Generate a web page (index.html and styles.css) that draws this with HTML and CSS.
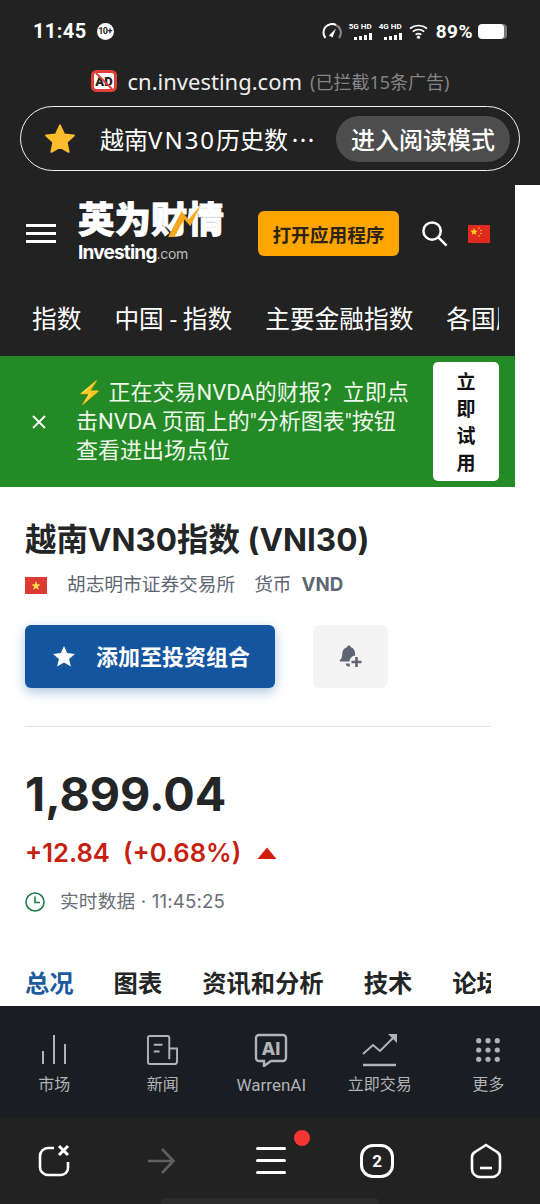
FILE: index.html
```html
<!DOCTYPE html>
<html lang="zh">
<head>
    <meta charset="UTF-8">
    <meta name="viewport" content="width=device-width, initial-scale=1.0">
    <title>越南VN30指数</title>
    <link rel="stylesheet" href="styles.css">
</head>
<body>
    <!-- Status bar -->
    <div class="status-bar">
        <div class="status-left">
            <span class="clock">11:45</span>
            <span class="notif-badge">10+</span>
        </div>
        <div class="status-right">
            <svg class="speed-icon" width="20" height="16" viewBox="0 0 20 16">
                <path d="M3.500 15A8.500 8.500 0 0 1 14 2" fill="none" stroke="#fff" stroke-width="2"/>
                <path d="M14 2A8.500 8.500 0 0 1 17 15" fill="none" stroke="#888" stroke-width="2"/>
                <path d="M7 12.500l7-7-3.500 9z" fill="#fff"/>
            </svg>
            <div class="signal">
                <span class="signal-label">5G HD</span>
                <span class="signal-bars"><i class="b1"></i><i class="b2"></i><i class="b3"></i><i class="b4"></i></span>
            </div>
            <div class="signal">
                <span class="signal-label">4G HD</span>
                <span class="signal-bars"><i class="b1"></i><i class="b2"></i><i class="b3"></i><i class="b4"></i></span>
            </div>
            <svg class="wifi-icon" width="20" height="15" viewBox="0 0 20 15">
                <path d="M1 4.500C6 .5 13 .5 18 4.500M3.800 7.600C7.200 5 11.800 5 15.200 7.600M6.600 10.600c1.800-1.200 4-1.200 5.800 0" fill="none" stroke="#fff" stroke-width="1.700"/>
                <circle cx="9.500" cy="13.200" r="1.600" fill="#fff"/>
            </svg>
            <span class="battery-text">89%</span>
            <span class="battery"><span class="battery-fill"></span></span>
        </div>
    </div>

    <!-- Browser address -->
    <div class="address-row">
        <svg class="ad-icon" width="26" height="22" viewBox="0 0 26 22">
            <rect x="1.500" y="1.500" width="23" height="19" rx="4" fill="#fff" stroke="#e0403a" stroke-width="3"/>
            <text x="13" y="16" text-anchor="middle" class="ad-text">AD</text>
            <path d="M5 3l16 16" stroke="#e0403a" stroke-width="2"/>
        </svg>
        <span class="address-host">cn.investing.com</span>
        <span class="address-note">(已拦截15条广告)</span>
    </div>
    <div class="reader-pill">
        <svg class="reader-star" width="32" height="31" viewBox="0 0 34 32">
            <path d="M17 2l4.400 9.600 10.400 1.200-7.700 7.100 2.100 10.300L17 25l-9.200 5.200 2.100-10.300-7.700-7.100 10.400-1.200z" fill="#fdbc2c" stroke="#fdbc2c" stroke-width="2" stroke-linejoin="round"/>
        </svg>
        <span class="reader-title">越南<span class="reader-latin">VN30</span>历史数<span class="reader-dots">…</span></span>
        <span class="reader-btn">进入阅读模式</span>
    </div>

    <!-- Web page -->
    <div class="page">
        <div class="site">
            <header class="site-header">
                <div class="burger"><i></i><i></i><i></i></div>
                <div class="logo">
                    <div class="logo-cn">英为财情<svg class="logo-bolt" width="40" height="32" viewBox="0 0 38 36"><path d="M37 0L25 24l-7-8L7 36H0L15 7l8 9z" fill="#f5a81c"/></svg></div>
                    <div class="logo-en">Investing<span>.com</span></div>
                </div>
                <div class="open-app">打开应用程序</div>
                <svg class="search-icon" width="27" height="27" viewBox="0 0 28 28">
                    <circle cx="11.500" cy="11.500" r="9" fill="none" stroke="#fff" stroke-width="2.600"/>
                    <path d="M18 18l8.500 8.500" stroke="#fff" stroke-width="2.600"/>
                </svg>
                <svg class="cn-flag" width="22" height="18" viewBox="0 0 22 18">
                    <rect width="22" height="18" fill="#de2a1f"/>
                    <path d="M6 3l1 2.600 2.700.1-2.100 1.700.7 2.700L6 8.600l-2.300 1.500.7-2.700-2.100-1.700L5 5.600z" fill="#fcd116"/>
                    <circle cx="11" cy="3" r=".8" fill="#fcd116"/><circle cx="13" cy="5.500" r=".8" fill="#fcd116"/>
                    <circle cx="13" cy="8.500" r=".8" fill="#fcd116"/><circle cx="11" cy="11" r=".8" fill="#fcd116"/>
                </svg>
            </header>
            <nav class="site-nav">
                <div class="site-nav-list">
                    <span>指数</span><span>中国 - 指数</span><span>主要金融指数</span><span>各国股指</span>
                </div>
            </nav>
            <div class="promo">
                <svg class="promo-close" width="14" height="14" viewBox="0 0 14 14">
                    <path d="M1 1l12 12M13 1L1 13" stroke="#fff" stroke-width="1.800"/>
                </svg>
                <div class="promo-text"><span class="bolt">⚡</span> 正在交易NVDA的财报？立即点<br>击NVDA 页面上的"分析图表"按钮<br>查看进出场点位</div>
                <div class="promo-btn">立即试用</div>
            </div>

            <main class="content">
                <h1 class="title">越南VN30指数 (VNI30)</h1>
                <div class="meta">
                    <svg class="vn-flag" width="22" height="17" viewBox="0 0 22 17">
                        <rect width="22" height="17" fill="#dd3a32"/>
                        <path d="M11 4l1.200 3.300 3.500.1-2.800 2.100 1 3.400-2.900-2-2.900 2 1-3.400-2.800-2.100 3.500-.1z" fill="#fbe04c"/>
                    </svg>
                    <span class="exchange">胡志明市证券交易所</span>
                    <span class="currency">货币</span>
                    <b class="currency-code">VND</b>
                </div>
                <div class="actions">
                    <div class="add-btn">
                        <svg width="24" height="23" viewBox="0 0 24 23">
                            <path d="M12 1l3.200 7.100 7.800.8-5.900 5.100 1.800 7.600L12 17.600l-6.900 4 1.800-7.600L1 8.900l7.800-.8z" fill="#fff"/>
                        </svg>
                        <span class="add-label">添加至投资组合</span>
                    </div>
                    <div class="alert-btn">
                        <svg width="26" height="26" viewBox="0 0 26 26">
                            <path d="M11 1.500c1 0 1.800.7 2 1.700 2.500.8 3.800 3 4 5.800l.2 2.500c-3 .3-5.400 2.800-5.600 6H2c-.6-.3-.5-1 0-1.400 1.300-1.200 1.800-2.400 2-4l.4-3.500c.3-2.600 2-4.600 4.600-5.400.2-1 1-1.700 2-1.700z" fill="#5f6673"/>
                            <path d="M7.500 19.500h4l.6 2.800c-1.800.8-3.800 0-4.600-2.800z" fill="#5f6673"/>
                            <path d="M18.500 13v10M13.500 18h10" stroke="#5f6673" stroke-width="2.600"/>
                        </svg>
                    </div>
                </div>
                <div class="divider"></div>
                <div class="price">1,899.04</div>
                <div class="change">
                    <span>+12.84</span><span class="change-pct">(+0.68%)</span>
                    <svg width="20" height="12" viewBox="0 0 20 12"><path d="M10 .5L19.500 12H.5z" fill="#cf1e0c"/></svg>
                </div>
                <div class="realtime">
                    <svg width="20" height="20" viewBox="0 0 20 20">
                        <circle cx="10" cy="10" r="9" fill="none" stroke="#217a45" stroke-width="1.600"/>
                        <path d="M10 4.500V10.500H15" fill="none" stroke="#217a45" stroke-width="1.600"/>
                    </svg>
                    <span>实时数据 · 11:45:25</span>
                </div>
                <div class="tabs">
                    <span class="tab-active">总况</span><span>图表</span><span>资讯和分析</span><span>技术</span><span>论坛</span>
                </div>
            </main>
        </div>
    </div>

    <!-- Site bottom nav -->
    <div class="app-nav">
        <div class="app-item">
            <div class="app-icon">
                <svg width="32" height="30" viewBox="0 2 32 30">
                    <path d="M5 31V18M16 31V2M27 31V11" stroke="#b0b3b7" stroke-width="2"/>
                </svg>
            </div>
            <span>市场</span>
        </div>
        <div class="app-item">
            <div class="app-icon">
                <svg width="33" height="32" viewBox="0 0 34 33">
                    <path d="M24 26V4a2 2 0 0 0-2-2H4a2 2 0 0 0-2 2v25a2 2 0 0 0 2 2h25a3 3 0 0 0 3-3V15h-8M8 11h9M8 18h6" fill="none" stroke="#b0b3b7" stroke-width="2"/>
                </svg>
            </div>
            <span>新闻</span>
        </div>
        <div class="app-item">
            <div class="app-icon">
                <svg width="34" height="34" viewBox="0 0 34 34">
                    <path d="M5 2h24a3 3 0 0 1 3 3v20a3 3 0 0 1-3 3H17l-7 5v-5H5a3 3 0 0 1-3-3V5a3 3 0 0 1 3-3z" fill="none" stroke="#b0b3b7" stroke-width="2.400"/>
                    <text x="17" y="22" text-anchor="middle" class="ai-text">AI</text>
                </svg>
            </div>
            <span class="app-latin">WarrenAI</span>
        </div>
        <div class="app-item">
            <div class="app-icon">
                <svg width="36" height="34" viewBox="0 0 36 34">
                    <path d="M1 21l10-9 7 6L33 3" fill="none" stroke="#b0b3b7" stroke-width="2"/>
                    <path d="M26 1h9v9z" fill="#b0b3b7"/>
                    <path d="M1 32h33" stroke="#b0b3b7" stroke-width="2.400"/>
                </svg>
            </div>
            <span>立即交易</span>
        </div>
        <div class="app-item">
            <div class="app-icon">
                <svg width="26" height="26" viewBox="0 0 28 28">
                    <g fill="#b0b3b7">
                        <circle cx="4" cy="4" r="2.800"/><circle cx="14" cy="4" r="2.800"/><circle cx="24" cy="4" r="2.800"/>
                        <circle cx="4" cy="14" r="2.800"/><circle cx="14" cy="14" r="2.800"/><circle cx="24" cy="14" r="2.800"/>
                        <circle cx="4" cy="24" r="2.800"/><circle cx="14" cy="24" r="2.800"/><circle cx="24" cy="24" r="2.800"/>
                    </g>
                </svg>
            </div>
            <span>更多</span>
        </div>
    </div>

    <!-- Browser toolbar -->
    <div class="browser-bar">
        <svg width="33" height="33" viewBox="0 0 33 33">
            <path d="M16 4H10a8 8 0 0 0-8 8v11a8 8 0 0 0 8 8h13a7 7 0 0 0 7-7v-6" fill="none" stroke="#fff" stroke-width="2.600"/>
            <path d="M21 2l9 9M30 2l-9 9" stroke="#fff" stroke-width="3"/>
        </svg>
        <svg class="forward-icon" width="27" height="28" viewBox="0 0 27 28">
            <path d="M0 14h25M14 2l11.500 12L14 26" fill="none" stroke="#606060" stroke-width="2.600"/>
        </svg>
        <div class="menu-btn"><i></i><i></i><i></i><span class="menu-dot"></span></div>
        <div class="tab-count">2</div>
        <svg width="34" height="36" viewBox="0 0 34 36">
            <path d="M17 2l11 7a6 6 0 0 1 3 5v12a8 8 0 0 1-8 8H11a8 8 0 0 1-8-8V14a6 6 0 0 1 3-5z" fill="none" stroke="#fff" stroke-width="2.600"/>
            <path d="M11 25h12" stroke="#fff" stroke-width="2.600"/>
        </svg>
        <div class="gesture-bar"></div>
    </div>
</body>
</html>
```

FILE: styles.css
```css
body {
    margin: 0;
    width: 540px;
    height: 1204px;
    overflow: hidden;
    display: flex;
    flex-direction: column;
    background-color: #222222;
    font-family: "Roboto", "Noto Sans CJK SC", sans-serif;
    color: #fff;
}

/* status bar */
.status-bar {
    height: 62px;
    flex: none;
    display: flex;
    justify-content: space-between;
    align-items: center;
    padding: 0 33px;
    box-sizing: border-box;
}
.status-left {
    display: flex;
    align-items: center;
    gap: 10px;
}
.clock {
    font-size: 20px;
    font-weight: 700;
    letter-spacing: 0.4px;
}
.notif-badge {
    width: 17px;
    height: 17px;
    border-radius: 50%;
    background: #fff;
    color: #222;
    font-size: 9px;
    font-weight: 700;
    letter-spacing: -0.5px;
    display: flex;
    align-items: center;
    justify-content: center;
}
.status-right {
    display: flex;
    align-items: center;
    gap: 5px;
}
.signal {
    display: flex;
    flex-direction: column;
    align-items: flex-end;
    gap: 2px;
    width: 25px;
}
.signal-label {
    font-size: 8px;
    font-weight: 700;
    line-height: 8px;
    white-space: nowrap;
}
.signal-bars {
    display: flex;
    align-items: flex-end;
    gap: 2px;
}
.signal-bars i {
    width: 3px;
    background: #fff;
}
.signal-bars .b1 { height: 3px; }
.signal-bars .b2 { height: 4px; }
.signal-bars .b3 { height: 5px; }
.signal-bars .b4 { height: 7px; }
.wifi-icon {
    margin-left: 2px;
}
.battery-text {
    font-size: 19px;
    font-weight: 700;
    letter-spacing: 0.5px;
    margin-left: 2px;
}
.battery {
    width: 29px;
    height: 15px;
    border-radius: 4px;
    background: #777;
    overflow: hidden;
}
.battery-fill {
    display: block;
    width: 26px;
    height: 15px;
    background: #fff;
    border-radius: 4px;
}

/* address + reader pill */
.address-row {
    height: 40px;
    flex: none;
    display: flex;
    align-items: center;
    justify-content: center;
    margin-top: -1px;
    margin-bottom: 5px;
    gap: 11px;
}
.ad-text {
    font-size: 13px;
    font-weight: 900;
    fill: #222;
}
.address-host {
    font-family: "Noto Sans", sans-serif;
    font-size: 22px;
    color: #eee;
}
.address-note {
    font-family: "Noto Sans", "Noto Sans CJK SC", sans-serif;
    font-size: 18px;
    color: #858585;
    margin-left: -3px;
}
.reader-pill {
    flex: none;
    height: 63px;
    margin: 0 20px 14px 20px;
    border: 1px solid #f2f2f2;
    border-radius: 33px;
    display: flex;
    align-items: center;
    padding: 0 9px 0 23px;
}
.reader-star {
    flex: none;
}
.reader-title {
    font-family: "Noto Sans", "Noto Sans CJK SC", sans-serif;
    font-size: 24px;
    margin-left: 24px;
    flex: 1;
    white-space: nowrap;
    overflow: hidden;
}
.reader-latin {
    letter-spacing: 2px;
}
.reader-dots {
    font-family: "Noto Sans CJK SC", sans-serif;
    margin-left: 3px;
}
.reader-btn {
    width: 174px;
    height: 46px;
    border-radius: 23px;
    background: #4d4d4d;
    display: flex;
    align-items: center;
    justify-content: center;
    font-size: 24px;
    font-weight: 500;
    flex: none;
}

/* page */
.page {
    flex: 1;
    background: #fff;
    overflow: hidden;
}
.site {
    width: 515px;
}
.site-header {
    height: 100px;
    background: #222;
    display: flex;
    align-items: center;
    padding: 0 0 3px 26px;
    box-sizing: border-box;
}
.burger {
    width: 30px;
    display: flex;
    flex-direction: column;
    gap: 5px;
    margin-right: 22px;
}
.burger i {
    height: 3px;
    background: #fff;
}
.logo {
    width: 180px;
}
.logo-cn {
    position: relative;
    font-size: 36.500px;
    font-weight: 900;
    -webkit-text-stroke: 0.8px #fff;
    line-height: 38px;
    white-space: nowrap;
}
.logo-bolt {
    position: absolute;
    left: 87px;
    top: 3px;
}
.logo-en {
    font-family: "Inter", sans-serif;
    font-size: 19px;
    font-weight: 700;
    letter-spacing: -0.8px;
    line-height: 24px;
    margin-top: 1px;
}
.logo-en span {
    font-size: 14px;
    font-weight: 400;
    color: #bbb;
    letter-spacing: -0.3px;
}
.open-app {
    width: 141px;
    height: 45px;
    border-radius: 6px;
    background: #ffa500;
    color: #2d2410;
    font-size: 18.700px;
    font-weight: 700;
    display: flex;
    align-items: center;
    justify-content: center;
    flex: none;
}
.search-icon {
    margin-left: 22px;
    flex: none;
}
.cn-flag {
    margin-left: 20px;
    flex: none;
}
.site-nav {
    height: 71px;
    background: #222;
    display: flex;
    align-items: center;
    padding: 0 16px 8px 32px;
    box-sizing: border-box;
}
.site-nav-list {
    display: flex;
    gap: 33px;
    font-size: 24.700px;
    white-space: nowrap;
    overflow: hidden;
    width: 100%;
}
.promo {
    height: 131px;
    background: #238a26;
    display: flex;
    align-items: center;
    padding-left: 32px;
}
.promo-close {
    width: 14px;
    margin-right: 30px;
    flex: none;
}
.promo-text {
    width: 350px;
    font-size: 22px;
    line-height: 29px;
    color: #eef7ea;
    white-space: nowrap;
    flex: none;
}
.promo-btn {
    width: 66px;
    height: 119px;
    margin-left: 7px;
    background: #fff;
    border-radius: 5px;
    color: #111;
    font-size: 19px;
    font-weight: 700;
    line-height: 27px;
    text-align: center;
    padding: 7px 23px;
    box-sizing: border-box;
    flex: none;
}

/* instrument */
.content {
    padding: 0 25px;
    color: #232526;
    font-family: "Inter", "Noto Sans CJK SC", sans-serif;
}
.title {
    margin: 31px 0 0;
    font-size: 31.500px;
    font-weight: 700;
    line-height: 44px;
}
.meta {
    display: flex;
    align-items: center;
    margin-top: 10px;
    font-size: 18.700px;
    line-height: 26px;
    color: #5f6673;
}
.exchange {
    margin-left: 20px;
}
.currency {
    margin-left: 19px;
}
.currency-code {
    margin-left: 10px;
}
.actions {
    display: flex;
    gap: 38px;
    margin-top: 27px;
}
.add-btn {
    width: 250px;
    height: 63px;
    border-radius: 6px;
    background: #14559f;
    box-shadow: 0 4px 12px rgba(20, 85, 159, 0.35);
    color: #fff;
    font-size: 22px;
    font-weight: 700;
    display: flex;
    align-items: center;
    gap: 20px;
    padding-left: 27px;
    box-sizing: border-box;
}
.add-label {
    padding-bottom: 4px;
}
.alert-btn {
    width: 75px;
    height: 63px;
    border-radius: 6px;
    background: #f4f4f5;
    display: flex;
    align-items: center;
    justify-content: center;
}
.divider {
    height: 1px;
    width: 466px;
    background: #e4e5e7;
    margin-top: 38px;
}
.price {
    font-size: 46.700px;
    font-weight: 700;
    line-height: 58px;
    margin-top: 38px;
}
.change {
    display: flex;
    align-items: center;
    font-size: 25.600px;
    font-weight: 600;
    color: #c6200f;
    margin-top: 15px;
    line-height: 30px;
}
.change-pct {
    margin-left: 13px;
    margin-right: 16px;
}
.realtime {
    display: flex;
    align-items: center;
    gap: 15px;
    margin-top: 21px;
    font-size: 18.700px;
    line-height: 26px;
    color: #6a6f78;
    letter-spacing: 0.15px;
}
.tabs {
    display: flex;
    gap: 40px;
    margin-top: 50px;
    font-size: 24.300px;
    font-weight: 600;
    line-height: 36px;
    white-space: nowrap;
    overflow: hidden;
    width: 466px;
}
.tab-active {
    color: #1d5c9c;
}

/* bottom bars */
.app-nav {
    height: 112px;
    flex: none;
    background: #1a1d22;
    display: grid;
    grid-template-columns: repeat(5, 108.500px);
}
.app-item {
    display: flex;
    flex-direction: column;
    align-items: center;
    justify-content: flex-end;
    padding-bottom: 23px;
    gap: 6px;
    font-size: 16px;
    line-height: 20px;
    color: #b0b3b7;
}
.app-icon {
    height: 38px;
    display: flex;
    align-items: center;
}
.app-latin {
    font-size: 17px;
}
.ai-text {
    font-family: "Inter", sans-serif;
    font-size: 18px;
    font-weight: 800;
    fill: #b0b3b7;
}
.browser-bar {
    height: 86px;
    flex: none;
    display: flex;
    align-items: center;
    justify-content: space-between;
    padding: 0 37px 1px 38px;
    box-sizing: border-box;
    position: relative;
}
.forward-icon {
    margin-left: 2px;
}
.menu-btn {
    width: 30px;
    margin-left: 6px;
    display: flex;
    flex-direction: column;
    gap: 9px;
    position: relative;
}
.menu-btn i {
    height: 3px;
    background: #fff;
    border-radius: 2px;
}
.menu-dot {
    position: absolute;
    left: 38px;
    top: -17px;
    width: 16px;
    height: 16px;
    border-radius: 50%;
    background: #f43531;
}
.tab-count {
    width: 34px;
    height: 34px;
    border: 3px solid #fff;
    border-radius: 13px;
    box-sizing: border-box;
    display: flex;
    align-items: center;
    justify-content: center;
    font-family: "Roboto", sans-serif;
    font-size: 17px;
    font-weight: 700;
}
.gesture-bar {
    position: absolute;
    left: 161px;
    bottom: 0;
    width: 218px;
    height: 6px;
    background: #2b2b2b;
    border-radius: 4px 4px 0 0;
}
```
